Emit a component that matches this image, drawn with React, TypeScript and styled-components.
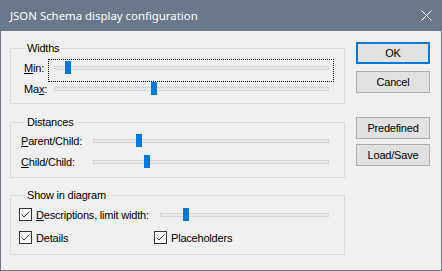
import React from "react";
import styled, { createGlobalStyle } from "styled-components";

const GlobalStyle = createGlobalStyle`
  html, body {
    margin: 0;
    padding: 0;
    background: #f0f0f0;
  }
  * {
    box-sizing: border-box;
  }
`;

const Window = styled.div`
  width: 442px;
  height: 271px;
  display: flex;
  flex-direction: column;
  background: #f0f0f0;
  border: 1px solid #6b788b;
  border-top: none;
  font-family: "Liberation Sans", Arial, sans-serif;
  font-size: 11px;
  letter-spacing: -0.2px;
  color: #000;
`;

const TitleBar = styled.div`
  height: 31px;
  flex: none;
  margin: 0 -1px;
  padding: 0 10px 0 10px;
  display: flex;
  align-items: center;
  justify-content: space-between;
  background: #6b788b;
  color: #fff;
  font-family: "Noto Sans", "Open Sans", sans-serif;
  font-size: 11.4px;
  letter-spacing: 0;
`;

const Body = styled.div`
  display: flex;
  gap: 11px;
  padding: 10px 11px 0 9px;
`;

const LeftColumn = styled.div`
  width: 335px;
  display: flex;
  flex-direction: column;
`;

const RightColumn = styled.div`
  width: 74px;
  display: flex;
  flex-direction: column;
  padding-top: 1px;
`;

const Group = styled.fieldset<{ $top: number; $pt: number; $pb: number }>`
  margin: ${p => p.$top}px 0 0 0;
  padding: ${p => p.$pt}px 10px ${p => p.$pb}px 8px;
  border: 1px solid #dcdcdc;
  min-width: 0;
`;

const Legend = styled.legend`
  margin-left: 6px;
  padding: 0 2px;
  line-height: 14px;
  height: 14px;
`;

const Row = styled.div`
  height: 21px;
  display: flex;
  align-items: center;
`;

const Label = styled.div<{ $indent: number; $width: number }>`
  margin-left: ${p => p.$indent}px;
  width: ${p => p.$width}px;
  flex: none;
  white-space: nowrap;
`;

const SliderBox = styled.div<{ $focused?: boolean }>`
  position: relative;
  flex: 1;
  height: 21px;
  &::after {
    content: "";
    display: ${p => (p.$focused ? "block" : "none")};
    position: absolute;
    left: 0;
    right: 0;
    top: 2px;
    height: 21px;
    border: 1px dotted #000;
  }
`;

const Track = styled.div`
  position: absolute;
  left: 6px;
  right: 5px;
  top: 9px;
  height: 4px;
  background: #e7eaea;
  border: 1px solid #d6d6d6;
`;

const Thumb = styled.div`
  position: absolute;
  top: 4px;
  width: 6px;
  height: 13px;
  background: #0078d7;
`;

const CheckGrid = styled.div`
  display: grid;
  grid-template-columns: 135px 1fr;
  row-gap: 2px;
`;

const CheckLabel = styled.label`
  display: flex;
  align-items: center;
  gap: 4px;
  height: 21px;
  white-space: nowrap;
`;

const Box = styled.span`
  width: 13px;
  height: 13px;
  flex: none;
  border: 1px solid #333;
  background: #fff;
  display: flex;
  align-items: center;
  justify-content: center;
`;

const Button = styled.button<{ $default?: boolean; $gap: number }>`
  width: 74px;
  height: 22px;
  margin-top: ${p => p.$gap}px;
  padding: 0;
  font-family: "Liberation Sans", Arial, sans-serif;
  font-size: 11px;
  letter-spacing: -0.2px;
  color: #000;
  background: #e1e1e1;
  border: ${p => (p.$default ? "2px solid #0078d7" : "1px solid #adadad")};
`;

const Slider = ({ offset, focused }: { offset: number; focused?: boolean }) => (
  <SliderBox $focused={focused}>
    <Track />
    <Thumb style={{ left: 6 + offset }} />
  </SliderBox>
);

const Check = ({ children }: { children: React.ReactNode }) => (
  <CheckLabel>
    <Box>
      <svg width="11" height="11" viewBox="0 0 11 11">
        <polyline points="1.5,5.5 4,8 9.5,2.5" fill="none" stroke="#333" strokeWidth="1" />
      </svg>
    </Box>
    <span>{children}</span>
  </CheckLabel>
);

const App = () => (
  <>
    <GlobalStyle />
    <Window>
      <TitleBar>
        <span>JSON Schema display configuration</span>
        <svg width="11" height="11" viewBox="0 0 11 11">
          <path d="M0.5 0.5 L10.5 10.5 M10.5 0.5 L0.5 10.5" stroke="#fff" strokeWidth="1" />
        </svg>
      </TitleBar>
      <Body>
        <LeftColumn>
          <Group $top={0} $pt={2} $pb={4}>
            <Legend>Widths</Legend>
            <Row>
              <Label $indent={5} $width={24}><u>M</u>in:</Label>
              <Slider offset={11} focused />
            </Row>
            <Row>
              <Label $indent={5} $width={24}>Ma<u>x</u>:</Label>
              <Slider offset={97} />
            </Row>
          </Group>
          <Group $top={11} $pt={1} $pb={5}>
            <Legend>Distances</Legend>
            <Row>
              <Label $indent={2} $width={66}><u>P</u>arent/Child:</Label>
              <Slider offset={43} />
            </Row>
            <Row>
              <Label $indent={2} $width={66}><u>C</u>hild/Child:</Label>
              <Slider offset={51} />
            </Row>
          </Group>
          <Group $top={10} $pt={2} $pb={6}>
            <Legend>Show in diagram</Legend>
            <CheckGrid>
              <Check><u>D</u>escriptions, limit width:</Check>
              <Row>
                <Slider offset={23} />
              </Row>
              <Check>Details</Check>
              <Check>Placeholders</Check>
            </CheckGrid>
          </Group>
        </LeftColumn>
        <RightColumn>
          <Button $default $gap={0}>OK</Button>
          <Button $gap={7}>Cancel</Button>
          <Button $gap={24}>Predefined</Button>
          <Button $gap={5}>Load/Save</Button>
        </RightColumn>
      </Body>
    </Window>
  </>
);

export default App;
